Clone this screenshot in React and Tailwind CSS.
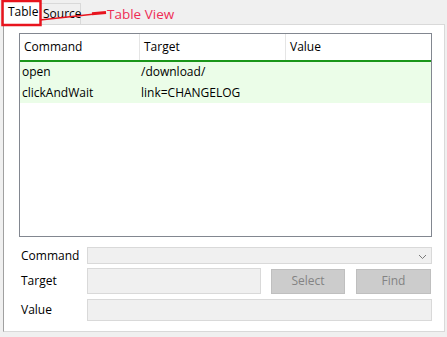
import React from "react";

const font = { fontFamily: '"Segoe UI", "Open Sans", "Noto Sans", sans-serif' };

export default function App() {
  return (
    <div className="relative w-[447px] h-[337px] bg-[#f0f0f0] overflow-hidden text-[12px] text-black" style={font}>
      {/* Tab strip */}
      <div className="flex h-[24px] items-end pl-[3px]">
        <div className="relative z-10 h-[25px] w-[38px] bg-white border-l border-r border-t border-[#d9d9d9] flex items-start pt-[3px] pl-[4px] leading-[16px] -mb-[1px]">
          Table
        </div>
        <div className="h-[21px] w-[40px] bg-[#f0f0f0] border-r border-t border-[#d9d9d9] flex items-start pt-[2px] pl-[2px] leading-[16px]">
          Source
        </div>
      </div>

      {/* Panel */}
      <div className="ml-[3px] w-[442px] h-[308px] bg-white border border-[#d9d9d9] border-l-[#a0a0a0] pt-[8px] pl-[15px] pr-[12px]">
        {/* Grid */}
        <div className="h-[204px] border border-[#828790] bg-white">
          <div className="flex h-[28px] items-center border-b-2 border-[#1a961a]">
            <div className="w-[120px] h-full flex items-center pl-[4px] border-r border-[#e5e5e5]">Command</div>
            <div className="w-[146px] h-full flex items-center pl-[4px] border-r border-[#e5e5e5]">Target</div>
            <div className="flex-1 h-full flex items-center pl-[4px]">Value</div>
          </div>
          <div className="bg-[#ebfde8]">
            <div className="flex h-[20px] items-center">
              <div className="w-[120px] pl-[2px]">open</div>
              <div className="w-[146px] pl-[1px]">/download/</div>
            </div>
            <div className="flex h-[21px] items-center">
              <div className="w-[120px] pl-[2px]">clickAndWait</div>
              <div className="w-[146px] pl-[1px]">link=CHANGELOG</div>
            </div>
          </div>
        </div>

        {/* Form */}
        <div className="mt-[10px] flex flex-col">
          <div className="flex items-center h-[17px]">
            <div className="w-[68px] pl-[2px]">Command</div>
            <div className="flex-1 h-[17px] bg-[#f0f0f0] border border-[#d9d9d9] flex items-center justify-end pr-[4px]">
              <svg width="9" height="6" viewBox="0 0 9 6" className="mt-[3px]">
                <path d="M1 1 L4.5 4.5 L8 1" fill="none" stroke="#7a7a7a" strokeWidth="1" />
              </svg>
            </div>
          </div>
          <div className="flex items-center h-[26px] mt-[4px]">
            <div className="w-[68px] pl-[2px]">Target</div>
            <div className="w-[174px] h-[26px] bg-[#f0f0f0] border border-[#d9d9d9]" />
            <div className="ml-[10px] w-[74px] h-[25px] bg-[#cccccc] border border-[#bfbfbf] flex items-center justify-center text-[#838383]">Select</div>
            <div className="ml-[11px] w-[75px] h-[25px] bg-[#cccccc] border border-[#bfbfbf] flex items-center justify-center text-[#838383]">Find</div>
          </div>
          <div className="flex items-center h-[22px] mt-[5px]">
            <div className="w-[68px] pl-[2px]">Value</div>
            <div className="flex-1 h-[22px] bg-[#f0f0f0] border border-[#d9d9d9]" />
          </div>
        </div>
      </div>

      {/* Annotation overlay */}
      <svg className="absolute left-0 top-0 z-20 pointer-events-none" width="447" height="40">
        <rect x="2.5" y="1" width="38" height="24" fill="none" stroke="#e8141e" strokeWidth="2.5" />
        <line x1="40" y1="20" x2="95" y2="14" stroke="#e8141e" strokeWidth="1.5" />
        <line x1="92" y1="13.8" x2="106" y2="12.6" stroke="#e8141e" strokeWidth="3" />
      </svg>
      <div className="absolute z-20 left-[107px] top-[5px] text-[13.5px] leading-[18px] text-[#ee2d55]" style={font}>
        Table View
      </div>
    </div>
  );
}
